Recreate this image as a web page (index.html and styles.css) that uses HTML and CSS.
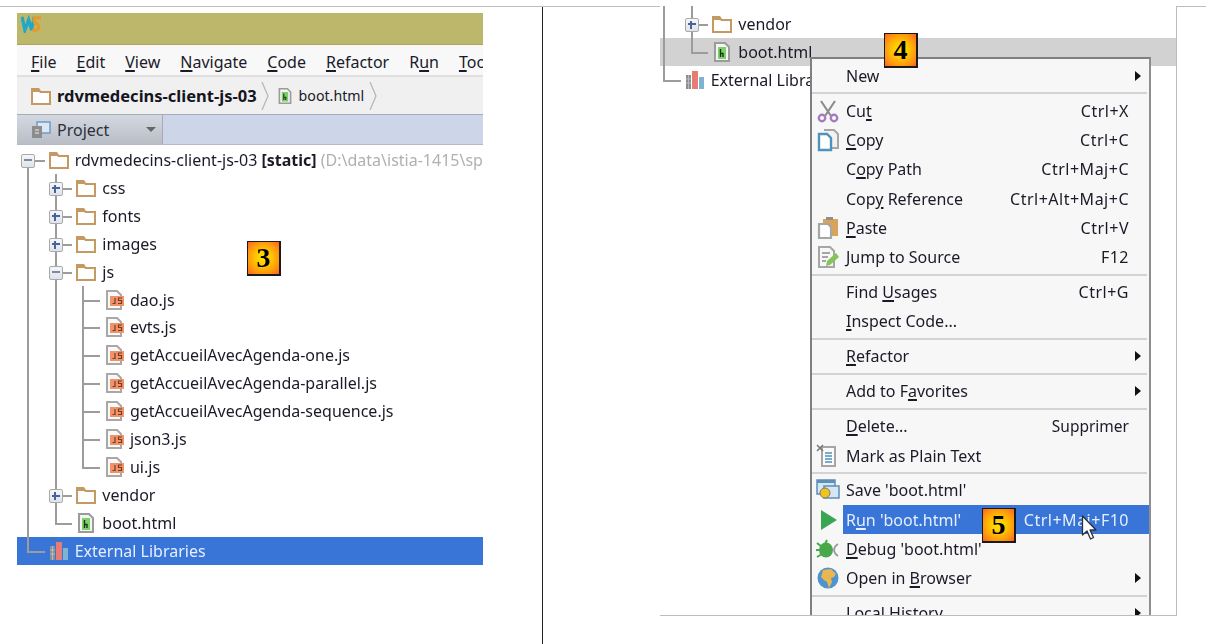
FILE: index.html
```html
<!DOCTYPE html>
<html lang="fr">
<head>
<meta charset="utf-8">
<title>WebStorm</title>
<link rel="stylesheet" href="styles.css">
</head>
<body>
<svg class="sprite" xmlns="http://www.w3.org/2000/svg">
  <symbol id="folder" viewBox="0 0 20 18"><path d="M1 2h6.500l2 3H19v12H1z" fill="#fff" stroke="#c49a62" stroke-width="2"/><path d="M1 2h6.500l2 3H1z" fill="#c49a62"/></symbol>
  <symbol id="html" viewBox="0 0 20 20"><path d="M3 1h10l4 4v14H3z" fill="#f4f4f4" stroke="#9b9b9b" stroke-width="2"/><rect x="6" y="5" width="8" height="12" fill="#7fd06a"/><path d="M8.500 7v8M8.500 11.500h2.500v3.500" fill="none" stroke="#143a14" stroke-width="1.400"/></symbol>
  <symbol id="js" viewBox="0 0 20 20"><path d="M3 1h10l4 4v14H3z" fill="#fafafa" stroke="#a8a8a8" stroke-width="2"/><rect x="6" y="6" width="14" height="10" fill="#f0936b"/><path d="M11 8v5.500H8.500M18 8h-3.500v2.500h3V13.500H14" fill="none" stroke="#7a3a20" stroke-width="1.200"/></symbol>
  <symbol id="libs" viewBox="0 0 20 20"><rect x="1" y="5" width="5" height="14" fill="#8d8d8d"/><path d="M1 9h5M1 13h5M3.500 5v14" stroke="#c4c4c4" stroke-width=".8"/><rect x="7" y="1" width="6" height="18" fill="#e67c73"/><rect x="14" y="7" width="5" height="12" fill="#7db4d4"/></symbol>
  <symbol id="cut" viewBox="0 0 24 24"><path d="M5 2l10 15M19 2L9 17" stroke="#8d8d8d" stroke-width="2.200" fill="none"/><circle cx="6" cy="19" r="3.200" fill="#fff" stroke="#a57cc0" stroke-width="2.400"/><circle cx="18" cy="19" r="3.200" fill="#fff" stroke="#a57cc0" stroke-width="2.400"/></symbol>
  <symbol id="copy" viewBox="0 0 24 24"><path d="M8 2h10l4 4v14h-7" fill="#f2f2f2" stroke="#a6a6a6" stroke-width="2"/><path d="M3 6h8l4 4v12H3z" fill="#fff" stroke="#4f93bd" stroke-width="2.400"/></symbol>
  <symbol id="paste" viewBox="0 0 24 24"><rect x="7" y="3" width="15" height="17" fill="#d9a35c"/><rect x="10" y="1" width="7" height="3" fill="#8f8f8f"/><path d="M3 8h9l3 3v11H3z" fill="#fff" stroke="#a6a6a6" stroke-width="2.200"/></symbol>
  <symbol id="jump" viewBox="0 0 24 24"><path d="M3 2h11l4 4v16H3z" fill="#f7f7f7" stroke="#a6a6a6" stroke-width="2"/><path d="M6 8h8M6 12h6M6 16h4" stroke="#8c8c8c" stroke-width="1.500"/><path d="M10 21l1-5 9-8 3 4-9 8z" fill="#86c45a"/></symbol>
  <symbol id="plain" viewBox="0 0 24 24"><path d="M6 3h13v19H6z" fill="#fbfbfb" stroke="#a6a6a6" stroke-width="2"/><path d="M9 9h7M9 12h7M9 15h7M9 18h7" stroke="#4f93bd" stroke-width="1.400"/><path d="M1 1l6 6M7 1L1 7" stroke="#777" stroke-width="1.500"/></symbol>
  <symbol id="save" viewBox="0 0 24 24"><rect x="1" y="2" width="18" height="14" fill="#d5e6f4" stroke="#5d8fb8" stroke-width="1.500"/><rect x="1" y="2" width="18" height="3" fill="#5d8fb8"/><rect x="8" y="8" width="15" height="12" fill="#d5e6f4" stroke="#5d8fb8" stroke-width="1.500"/><circle cx="9" cy="15" r="5" fill="#f0c419" stroke="#7a7a7a"/></symbol>
  <symbol id="play" viewBox="0 0 24 24"><path d="M5 2l16 10L5 22z" fill="#3aa655"/></symbol>
  <symbol id="bug" viewBox="0 0 24 24"><ellipse cx="10" cy="13" rx="7" ry="7.500" fill="#49a84a"/><path d="M1 6l5 4M1 20l5-3M0 13h4M11 3l-2 4" stroke="#49a84a" stroke-width="2"/><path d="M22 7a8 8 0 0 0-4 6 8 8 0 0 0 4 6" fill="none" stroke="#9a9a9a" stroke-width="1.800"/></symbol>
  <symbol id="globe" viewBox="0 0 24 24"><circle cx="12" cy="12" r="10.500" fill="#4f93cf"/><path d="M7 4l8-1 5 5-2 3-3 1 1 4-3 6-2-6-3-2-3-3z" fill="#eab650"/></symbol>
  <symbol id="project" viewBox="0 0 20 18"><rect x="6" y="1" width="13" height="11" fill="#dbe7f5" stroke="#5e93c4" stroke-width="1.300"/><rect x="1" y="5" width="10" height="12" fill="#8c8c8c"/><path d="M4 9h4M4 12h4" stroke="#eee" stroke-width="1.200"/></symbol>
  <symbol id="chevron" viewBox="0 0 8 28"><path d="M1 0l6 14-6 14" fill="none" stroke="#b4b4b4" stroke-width="1.200"/></symbol>
</svg>

<div class="doc">
  <section class="left">
    <div class="ide">
      <div class="titlebar">
        <svg class="logo" viewBox="0 0 22 19"><path d="M1 2l3 14 4-11 3 11 3-14" fill="none" stroke="#1fa8c9" stroke-width="3.400"/><path d="M21 3h-5c-3 0-3 5 0 6s4 6 0 7h-4" fill="none" stroke="#e69a28" stroke-width="3.400"/></svg>
      </div>
      <nav class="menubar">
        <span><u>F</u>ile</span><span><u>E</u>dit</span><span><u>V</u>iew</span><span><u>N</u>avigate</span><span><u>C</u>ode</span><span><u>R</u>efactor</span><span>R<u>u</u>n</span><span><u>T</u>ools</span>
      </nav>
      <div class="crumbs">
        <svg class="i20"><use href="#folder"/></svg>
        <b>rdvmedecins-client-js-03</b>
        <svg class="chev"><use href="#chevron"/></svg>
        <svg class="i16"><use href="#html"/></svg>
        <span>boot.html</span>
        <svg class="chev"><use href="#chevron"/></svg>
      </div>
      <div class="toolbar">
        <div class="tab">
          <svg class="i20"><use href="#project"/></svg>
          <span>Project</span>
          <i class="drop"></i>
        </div>
      </div>
      <div class="tree">
        <div class="row"><span class="g head"><i class="box minus"></i></span><svg class="ico"><use href="#folder"/></svg><span>rdvmedecins-client-js-03 <b>[static]</b> <em>(D:\data\istia-1415\spa\angular\client)</em></span></div>
        <div class="row"><span class="g pipe"></span><span class="g tee"><i class="box plus"></i></span><svg class="ico"><use href="#folder"/></svg><span>css</span></div>
        <div class="row"><span class="g pipe"></span><span class="g tee"><i class="box plus"></i></span><svg class="ico"><use href="#folder"/></svg><span>fonts</span></div>
        <div class="row"><span class="g pipe"></span><span class="g tee"><i class="box plus"></i></span><svg class="ico"><use href="#folder"/></svg><span>images</span></div>
        <div class="row"><span class="g pipe"></span><span class="g tee"><i class="box minus"></i></span><svg class="ico"><use href="#folder"/></svg><span>js</span></div>
        <div class="row"><span class="g pipe"></span><span class="g pipe"></span><span class="g tee"></span><svg class="ico"><use href="#js"/></svg><span>dao.js</span></div>
        <div class="row"><span class="g pipe"></span><span class="g pipe"></span><span class="g tee"></span><svg class="ico"><use href="#js"/></svg><span>evts.js</span></div>
        <div class="row"><span class="g pipe"></span><span class="g pipe"></span><span class="g tee"></span><svg class="ico"><use href="#js"/></svg><span>getAccueilAvecAgenda-one.js</span></div>
        <div class="row"><span class="g pipe"></span><span class="g pipe"></span><span class="g tee"></span><svg class="ico"><use href="#js"/></svg><span>getAccueilAvecAgenda-parallel.js</span></div>
        <div class="row"><span class="g pipe"></span><span class="g pipe"></span><span class="g tee"></span><svg class="ico"><use href="#js"/></svg><span>getAccueilAvecAgenda-sequence.js</span></div>
        <div class="row"><span class="g pipe"></span><span class="g pipe"></span><span class="g tee"></span><svg class="ico"><use href="#js"/></svg><span>json3.js</span></div>
        <div class="row"><span class="g pipe"></span><span class="g pipe"></span><span class="g last"></span><svg class="ico"><use href="#js"/></svg><span>ui.js</span></div>
        <div class="row"><span class="g pipe"></span><span class="g tee"><i class="box plus"></i></span><svg class="ico"><use href="#folder"/></svg><span>vendor</span></div>
        <div class="row"><span class="g pipe"></span><span class="g last"></span><svg class="ico"><use href="#html"/></svg><span>boot.html</span></div>
        <div class="row selected"><span class="g last"></span><svg class="ico"><use href="#libs"/></svg><span>External Libraries</span></div>
      </div>
    </div>
    <div class="badge badge-3">3</div>
  </section>

  <section class="right">
    <div class="tree cut">
      <div class="row stub"><span class="g pipe"></span><span class="g pipe"></span></div>
      <div class="row"><span class="g pipe"></span><span class="g tee"><i class="box plus"></i></span><svg class="ico"><use href="#folder"/></svg><span>vendor</span></div>
      <div class="row hover"><span class="g pipe"></span><span class="g last"></span><svg class="ico"><use href="#html"/></svg><span>boot.html</span></div>
      <div class="row"><span class="g last"></span><svg class="ico"><use href="#libs"/></svg><span>External Libraries</span></div>
    </div>

    <div class="menu">
      <div class="item"><span class="ic"></span><span class="lb">New<i class="ar"></i></span></div>
      <hr>
      <div class="item"><span class="ic"><svg class="i24"><use href="#cut"/></svg></span><span class="lb"><span>Cu<u>t</u></span><span class="sc">Ctrl+X</span></span></div>
      <div class="item"><span class="ic"><svg class="i24"><use href="#copy"/></svg></span><span class="lb"><span><u>C</u>opy</span><span class="sc">Ctrl+C</span></span></div>
      <div class="item"><span class="ic"></span><span class="lb"><span>C<u>o</u>py Path</span><span class="sc">Ctrl+Maj+C</span></span></div>
      <div class="item"><span class="ic"></span><span class="lb"><span>Cop<u>y</u> Reference</span><span class="sc">Ctrl+Alt+Maj+C</span></span></div>
      <div class="item"><span class="ic"><svg class="i24"><use href="#paste"/></svg></span><span class="lb"><span><u>P</u>aste</span><span class="sc">Ctrl+V</span></span></div>
      <div class="item"><span class="ic"><svg class="i24"><use href="#jump"/></svg></span><span class="lb"><span>Jump to Source</span><span class="sc">F12</span></span></div>
      <hr>
      <div class="item"><span class="ic"></span><span class="lb"><span>Find <u>U</u>sages</span><span class="sc">Ctrl+G</span></span></div>
      <div class="item"><span class="ic"></span><span class="lb"><span><u>I</u>nspect Code...</span></span></div>
      <hr>
      <div class="item"><span class="ic"></span><span class="lb"><span><u>R</u>efactor</span><i class="ar"></i></span></div>
      <hr>
      <div class="item"><span class="ic"></span><span class="lb"><span>Add to F<u>a</u>vorites</span><i class="ar"></i></span></div>
      <hr>
      <div class="item"><span class="ic"></span><span class="lb"><span><u>D</u>elete...</span><span class="sc word">Supprimer</span></span></div>
      <div class="item"><span class="ic"><svg class="i24"><use href="#plain"/></svg></span><span class="lb"><span>Mark as Plain Text</span></span></div>
      <hr>
      <div class="item"><span class="ic"><svg class="i24"><use href="#save"/></svg></span><span class="lb"><span>Save 'boot.html'</span></span></div>
      <div class="item active"><span class="ic"><svg class="i24"><use href="#play"/></svg></span><span class="lb"><span>R<u>u</u>n 'boot.html'</span><span class="sc">Ctrl+Maj+F10</span></span></div>
      <div class="item"><span class="ic"><svg class="i24"><use href="#bug"/></svg></span><span class="lb"><span><u>D</u>ebug 'boot.html'</span></span></div>
      <div class="item"><span class="ic"><svg class="i24"><use href="#globe"/></svg></span><span class="lb"><span>Open in <u>B</u>rowser</span><i class="ar"></i></span></div>
      <hr>
      <div class="item"><span class="ic"></span><span class="lb"><span>Local <u>H</u>istory</span><i class="ar"></i></span></div>
    </div>

    <div class="badge badge-4">4</div>
    <div class="badge badge-5">5</div>
    <svg class="cursor" viewBox="0 0 17 26"><path d="M1.500 1v19l4.500-4 3.500 8 3-1.500-3.500-7.500h6z" fill="#fff" stroke="#2a2f3a" stroke-width="1.300" stroke-linejoin="round"/></svg>
  </section>
</div>
</body>
</html>
```

FILE: styles.css
```css
* { box-sizing: border-box; }
html, body { margin: 0; height: 100%; overflow: hidden; background: #fff; }
body {
  padding-top: 6px;
  font-family: "Noto Sans", "Open Sans", sans-serif;
  font-size: 16px;
  color: #1a1a28;
}
.sprite { display: none; }
svg { display: block; flex: none; }
.i16 { width: 16px; height: 20px; }
.i20 { width: 20px; height: 18px; }
.i24 { width: 24px; height: 24px; }
u { text-underline-offset: 2px; text-decoration-thickness: 1.5px; }

.doc { display: flex; height: 638px; border-top: 1px solid #bdbdbd; }

.left {
  position: relative;
  flex: none;
  width: 543px;
  padding: 6px 0 0 17px;
  border-right: 1px solid #222;
}
.ide { width: 466px; overflow: hidden; filter: blur(.3px); }

.titlebar { height: 32px; background: #bdb76b; border-bottom: 1px solid #aaa563; padding: 2px 0 0 4px; }
.logo { width: 21px; height: 18px; }

.menubar {
  display: flex;
  gap: 20px;
  align-items: center;
  height: 32px;
  padding: 4px 0 0 14px;
  background: #f8f8f8;
  border-bottom: 2px solid #e0e0e0;
  white-space: nowrap;
}

.crumbs {
  display: flex;
  align-items: center;
  height: 38px;
  padding-left: 14px;
  background: #f0f0f0;
  border-bottom: 1px solid #a7adb8;
  white-space: nowrap;
  font-size: 14.2px;
}
.crumbs b { margin: 0 4px 0 6px; font-size: 16.5px; font-weight: 700; color: #15151f; }
.crumbs .i16 { margin-right: 6px; }
.chev { width: 8px; height: 28px; margin-right: 8px; }
.crumbs span + .chev { margin-left: 5px; }

.toolbar { height: 30px; background: #ccd6e8; border-bottom: 1px solid #b5bbc6; }
.tab {
  display: flex;
  align-items: center;
  width: 146px;
  height: 100%;
  padding-left: 14px;
  background: linear-gradient(#d4d8e0, #b9bdc5);
  border-right: 1px solid #a7abb3;
  color: #2c3040;
}
.tab span { margin-left: 6px; }
.drop {
  margin-left: auto;
  margin-right: 6px;
  border-left: 5px solid transparent;
  border-right: 5px solid transparent;
  border-top: 5px solid #666;
}

.tree { padding-top: 1px; white-space: nowrap; }
.row { display: flex; align-items: center; height: 27.93px; }
.row b { font-weight: 700; }
.row em { font-style: normal; color: #b0b0b0; }
.g { position: relative; flex: none; align-self: stretch; width: 27.67px; }
.g::before, .tee::after, .last::after, .head::after {
  content: "";
  position: absolute;
  background: #9c9c9c;
}
.g::before { left: 10px; top: 0; bottom: 0; width: 2px; }
.tee::after, .last::after, .head::after { left: 10px; right: 0; top: 50%; height: 2px; }
.last::before { bottom: 50%; }
.head::before { top: 50%; }
.ico { width: 20px; height: 20px; margin: 0 6px 0 4px; }

.box {
  position: absolute;
  z-index: 1;
  left: 4px;
  top: calc(50% - 6px);
  width: 14px;
  height: 14px;
  border: 1.5px solid #a9a9a9;
  border-radius: 2px;
  background: linear-gradient(#f6f6f6, #dfe3ea);
}
.box::before, .plus::after {
  content: "";
  position: absolute;
  background: #47639f;
}
.box::before { left: 2px; right: 2px; top: 4.5px; height: 2px; }
.plus::after { top: 2px; bottom: 2px; left: 4.500px; width: 2px; }
.minus::before { background: #7d8aa5; }

.selected { background: #3875d7; color: #e6eeff; }

.right {
  position: relative;
  flex: none;
  width: 517px;
  height: 610px;
  margin: -1px 0 0 117px;
  border-right: 1px solid #bcbcbc;
  border-bottom: 1px solid #bcbcbc;
  background: #fff;
  overflow: hidden;
}
.right .tree { padding: 0; filter: blur(.3px); }
.cut .g:first-child { width: 20.67px; }
.cut .g:first-child::before, .cut .g:first-child::after { left: 3px; }
.cut .row { height: 28px; }
.cut .row.stub { height: 3.5px; }
.hover { background: #d2d2d2; }

.menu {
  position: absolute;
  left: 150px;
  top: 51px;
  width: 341px;
  padding-top: 2px;
  background: #f7f7f7;
  border: 2px solid #7f7f7f;
  border-right-color: #8e8e8e;
  border-bottom: 0;
  white-space: nowrap;
  filter: blur(.3px);
}
.menu hr { height: 2px; margin: 1.8px 2px 1.8px 0; border: 0; background: #d3d3d3; }
.item { display: flex; height: 29.33px; }
.ic { display: flex; align-items: center; justify-content: center; flex: none; width: 31px; padding-left: 1px; }
.lb { display: flex; align-items: center; flex: 1; padding: 0 20px 0 3px; position: relative; }
.sc { margin-left: auto; letter-spacing: .5px; }
.sc.word { font-size: 15.5px; letter-spacing: 0; }
.ar {
  position: absolute;
  right: 8px;
  top: calc(50% - 5px);
  border-top: 5px solid transparent;
  border-bottom: 5px solid transparent;
  border-left: 6px solid #111;
}
.active .lb { background: #3875d7; color: #e6eeff; }

.badge {
  position: absolute;
  display: flex;
  align-items: center;
  justify-content: center;
  width: 34px;
  height: 35px;
  border: 1px solid #1a1a1a;
  border-right-width: 2px;
  border-bottom-width: 2px;
  background: radial-gradient(circle at 50% 50%, #ffe600 0%, #ffc800 35%, #ff9410 72%, #ff5f1e 100%);
  font: 700 28px "Liberation Serif", serif;
  color: #000;
}
.badge-3 { left: 247px; top: 234px; }
.badge-4 { left: 224px; top: 27px; }
.badge-5 { left: 322px; top: 502px; }

.cursor { position: absolute; left: 421px; top: 509px; width: 17px; height: 26px; }
```
